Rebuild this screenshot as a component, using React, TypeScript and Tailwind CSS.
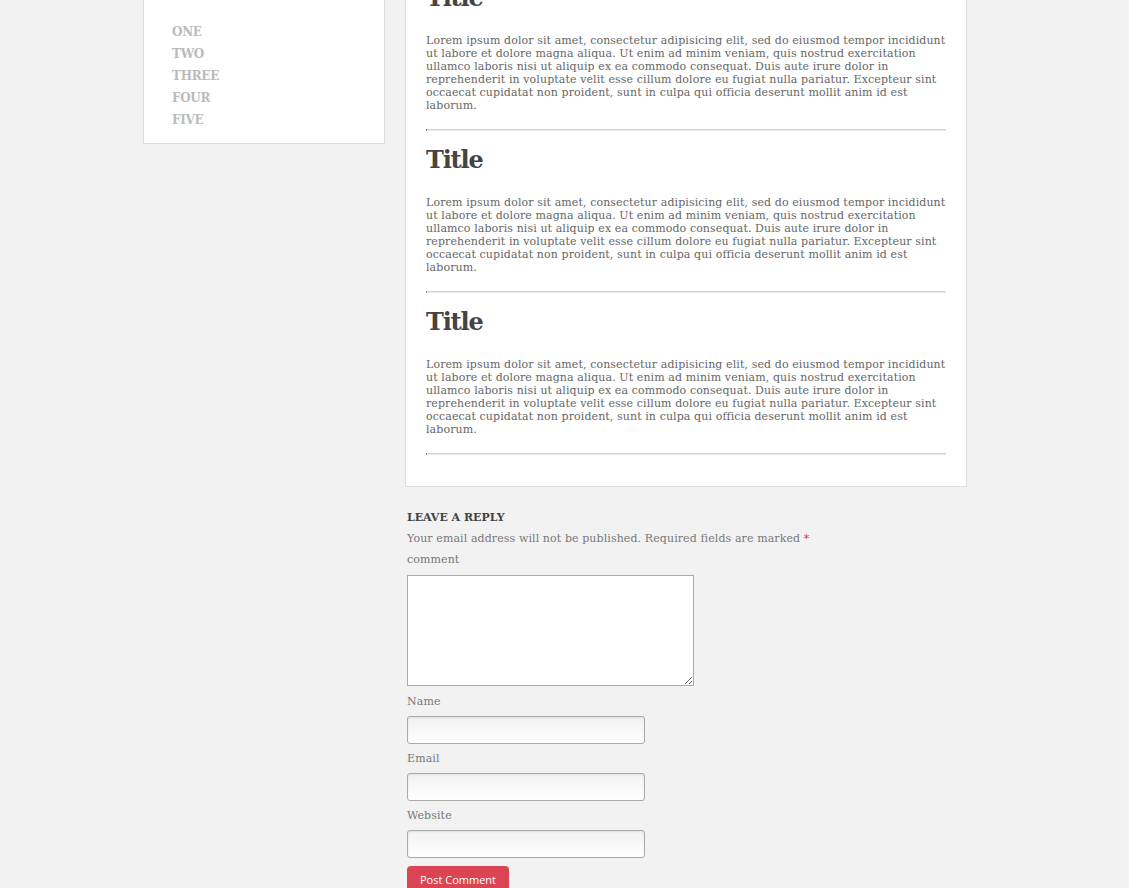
import React from 'react';

const lorem =
  'Lorem ipsum dolor sit amet, consectetur adipisicing elit, sed do eiusmod tempor incididunt ut labore et dolore magna aliqua. Ut enim ad minim veniam, quis nostrud exercitation ullamco laboris nisi ut aliquip ex ea commodo consequat. Duis aute irure dolor in reprehenderit in voluptate velit esse cillum dolore eu fugiat nulla pariatur. Excepteur sint occaecat cupidatat non proident, sunt in culpa qui officia deserunt mollit anim id est laborum.';

const menu = ['One', 'Two', 'Three', 'Four', 'Five'];

function Post() {
  return (
    <article>
      <h2 className="text-[24px] leading-[28px] font-bold text-[#444] tracking-[-1.2px]">Title</h2>
      <p className="mt-[22px] text-[11px] leading-[13px] tracking-[0.1px] text-[#666]">{lorem}</p>
      <div className="mt-[17px] h-[2px] border-t border-[#d4d4d4] border-b border-b-[#e8e8e8] border-l border-l-[#333]" />
    </article>
  );
}

function Field({ label }: { label: string }) {
  return (
    <div>
      <label className="block text-[11px] leading-[15px] tracking-[0.1px] text-[#777]">{label}</label>
      <input
        type="text"
        className="mt-[7px] block w-[238px] h-[28px] rounded-[3px] border border-[#aaa] bg-gradient-to-b from-[#f2f2f2] to-white shadow-[inset_0_1px_2px_rgba(0,0,0,0.08)] outline-none"
      />
    </div>
  );
}

export default function App() {
  return (
    <div className="min-h-screen bg-[#f2f2f2] font-['DejaVu_Serif',serif] overflow-hidden">
      <div className="-mt-[60px] pl-[143px] flex items-start gap-[20px]">
        <aside className="w-[242px] bg-white border border-[#ddd] pt-[80px] pb-[12px] pl-[28px]">
          <ul>
            {menu.map((item) => (
              <li
                key={item}
                className="text-[12px] leading-[22px] font-bold uppercase text-[#bbb] tracking-[-0.3px]"
              >
                {item}
              </li>
            ))}
          </ul>
        </aside>

        <div className="w-[562px]">
          <main className="bg-white border border-[#ddd] px-[20px] pt-[43px] pb-[31px] flex flex-col gap-[15px]">
            <Post />
            <Post />
            <Post />
          </main>

          <section className="pl-[2px] pt-[23px]">
            <h3 className="text-[11px] leading-[16px] font-bold uppercase text-[#444]">Leave a Reply</h3>
            <p className="mt-[5px] text-[11px] leading-[16px] tracking-[0.1px] text-[#777]">
              Your email address will not be published. Required fields are marked{' '}
              <span className="text-[#d63362]">*</span>
            </p>
            <label className="block mt-[5px] text-[11px] leading-[16px] tracking-[0.1px] text-[#777]">
              comment
            </label>
            <textarea className="mt-[7px] block w-[287px] h-[111px] border border-[#aaa] bg-white outline-none" />
            <div className="mt-[8px] flex flex-col gap-[7px]">
              <Field label="Name" />
              <Field label="Email" />
              <Field label="Website" />
            </div>
            <button className="mt-[8px] h-[28px] px-[13px] rounded-[4px] bg-[#db4453] text-white text-[11px] font-['Open_Sans',sans-serif]">
              Post Comment
            </button>
          </section>
        </div>
      </div>
    </div>
  );
}
